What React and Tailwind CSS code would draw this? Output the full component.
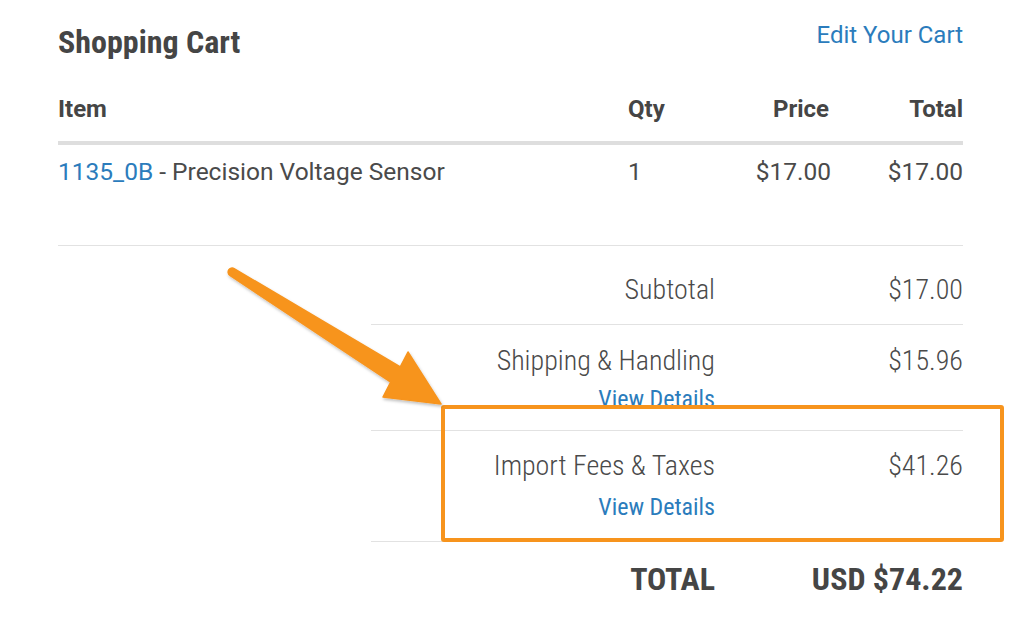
const cond = "font-['Roboto_Condensed','Liberation_Sans_Narrow',Roboto,sans-serif]"

function SummaryRow({ label, value, details, className, detailsClass }) {
  return (
    <div className={`grid grid-cols-[344px_1fr] border-b border-[#e2e2e2] ${className}`}>
      <div className="flex flex-col items-end">
        <span className="text-[28px] font-light leading-[36px] text-[#4a4a4a]">{label}</span>
        {details && (
          <a href="#" className={`text-[24px] leading-[36px] text-[#2b7cbc] ${detailsClass}`}>
            View Details
          </a>
        )}
      </div>
      <span className="text-right text-[28px] font-light leading-[36px] text-[#4a4a4a]">{value}</span>
    </div>
  )
}

function Arrow() {
  return (
    <svg className="pointer-events-none absolute left-0 top-0" width="1024" height="620" viewBox="0 0 1024 620">
      <defs>
        <filter id="sh" x="-10%" y="-10%" width="130%" height="130%">
          <feDropShadow dx="1" dy="2" stdDeviation="1.5" floodColor="#000" floodOpacity="0.25" />
        </filter>
      </defs>
      <path
        d="M234.1 268.6 L400.3 366.9 L408 352 L441 404 L383 397 L390.7 382.1 L229.9 275.4 A4 4 0 0 1 234.1 268.6 Z"
        fill="#f7941d"
        stroke="#f7941d"
        strokeLinejoin="round"
        strokeWidth="1.5"
        filter="url(#sh)"
      />
    </svg>
  )
}

export default function App() {
  return (
    <div className={`relative h-[620px] w-[1024px] overflow-hidden bg-white ${cond}`}>
      <div className="ml-[58px] w-[905px]">
        <div className="flex h-[76px] items-start justify-between">
          <h1 className="mt-[24px] text-[32px] font-bold leading-[36px] text-[#454545]">Shopping Cart</h1>
          <a href="#" className="mt-[19px] font-['Roboto',sans-serif] text-[24px] leading-[32px] text-[#2b7cbc]">
            Edit Your Cart
          </a>
        </div>

        <div className="grid h-[65px] grid-cols-[570px_72px_129px_134px] items-center font-['Roboto',sans-serif] text-[24px] font-bold text-[#454545]">
          <span>Item</span>
          <span>Qty</span>
          <span className="text-right">Price</span>
          <span className="text-right">Total</span>
        </div>
        <div className="h-[4px] bg-[#dedede]" />

        <div className="grid h-[101px] grid-cols-[570px_72px_131px_132px] border-b border-[#e2e2e2] pt-[11px] font-['Roboto',sans-serif] text-[24.5px] leading-[32px] text-[#4a4a4a]">
          <span>
            <a href="#" className="text-[#2b7cbc]">1135_0B</a> - Precision Voltage Sensor
          </span>
          <span>1</span>
          <span className="text-right">$17.00</span>
          <span className="text-right">$17.00</span>
        </div>

        <div className="ml-[313px]">
          <SummaryRow label="Subtotal" value="$17.00" className="h-[79px] pt-[26px]" />
          <SummaryRow label="Shipping & Handling" value="$15.96" details detailsClass="mt-[2px]" className="h-[106px] pt-[18px]" />
          <SummaryRow label="Import Fees & Taxes" value="$41.26" details detailsClass="mt-[5px]" className="h-[111px] pt-[17px]" />
          <div className="grid grid-cols-[344px_1fr] pt-[19px] text-[32px] font-bold leading-[36px] text-[#454545]">
            <span className="text-right">TOTAL</span>
            <span className="text-right">USD $74.22</span>
          </div>
        </div>
      </div>

      <div className="pointer-events-none absolute left-[441px] top-[405px] h-[137px] w-[563px] rounded-[3px] border-[4px] border-[#f7941d]" />
      <Arrow />
    </div>
  )
}
